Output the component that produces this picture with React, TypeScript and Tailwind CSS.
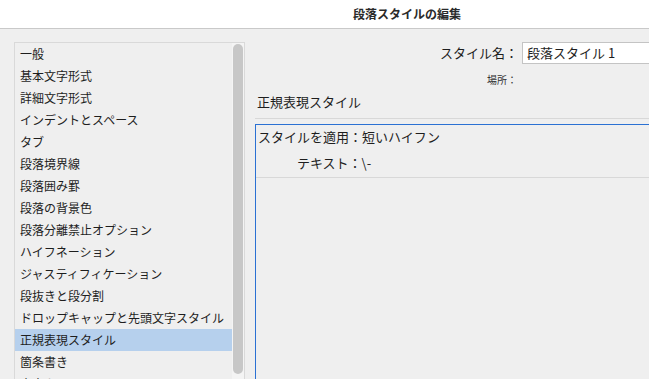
import React from "react";

const categories = [
    "一般",
    "基本文字形式",
    "詳細文字形式",
    "インデントとスペース",
    "タブ",
    "段落境界線",
    "段落囲み罫",
    "段落の背景色",
    "段落分離禁止オプション",
    "ハイフネーション",
    "ジャスティフィケーション",
    "段抜きと段分割",
    "ドロップキャップと先頭文字スタイル",
    "正規表現スタイル",
    "箇条書き",
    "文字カラー",
];

const selected = "正規表現スタイル";

export default function App() {
    return (
        <div
            className="w-[649px] h-[379px] overflow-hidden bg-[#efefef] text-[#1e1e1e] flex flex-col"
            style={{ fontFamily: '"Noto Sans CJK JP", "Noto Sans", sans-serif' }}
        >
            {/* title bar */}
            <div className="h-[29px] shrink-0 bg-white border-b border-[#c9c9c9] flex items-center pl-[353px]">
                <span className="text-[12px] font-bold text-[#2a2a2a] leading-none">段落スタイルの編集</span>
            </div>

            <div className="flex flex-1 min-h-0">
                {/* category list */}
                <div className="pl-[14px] pt-[13px] shrink-0">
                    <div className="w-[231px] h-[400px] border border-[#d9d9d9] flex">
                        <ul className="w-[217px]">
                            {categories.map((c) => (
                                <li
                                    key={c}
                                    className={
                                        "h-[22px] leading-[22px] pl-[5px] text-[12px] whitespace-nowrap " +
                                        (c === selected ? "bg-[#b6d0ed]" : "")
                                    }
                                >
                                    {c}
                                </li>
                            ))}
                        </ul>
                        <div className="w-[12px] bg-[#f4f4f4] pl-[1px] pr-[1px] pt-[1px]">
                            <div className="w-[10px] h-[330px] rounded-full bg-[#c7c7c7]" />
                        </div>
                    </div>
                </div>

                {/* settings pane */}
                <div className="flex-1 min-w-0 flex flex-col">
                    <div className="flex items-center mt-[13px] h-[22px]">
                        <div className="w-[273px] shrink-0 text-right text-[13px] whitespace-nowrap">スタイル名：</div>
                        <div className="ml-[4px] w-[160px] shrink-0 h-[22px] bg-white border border-[#c4c4c4] flex items-center pl-[4px] text-[13px] whitespace-nowrap">
                            段落スタイル 1
                        </div>
                    </div>
                    <div className="flex mt-[9px] h-[12px] items-center">
                        <div className="w-[272px] shrink-0 text-right text-[10px] text-[#333] whitespace-nowrap">場所：</div>
                    </div>
                    <div className="pl-[12px] mt-[8px] h-[18px] leading-[18px] text-[13px] whitespace-nowrap">正規表現スタイル</div>
                    <div className="ml-[10px] mt-[7px] border-t border-[#d8d8d8]" />
                    <div className="ml-[10px] mt-[5px] flex-1 border-l border-t border-[#2b71d3] flex flex-col">
                        <div className="pt-[3px] pb-[5px] border-b border-[#d8d8d8] text-[13px] whitespace-nowrap">
                            <div className="pl-[2px] h-[18px] leading-[18px]">スタイルを適用：短いハイフン</div>
                            <div className="pl-[41px] mt-[8px] h-[18px] leading-[18px]">テキスト：\-</div>
                        </div>
                    </div>
                </div>
            </div>
        </div>
    );
}
